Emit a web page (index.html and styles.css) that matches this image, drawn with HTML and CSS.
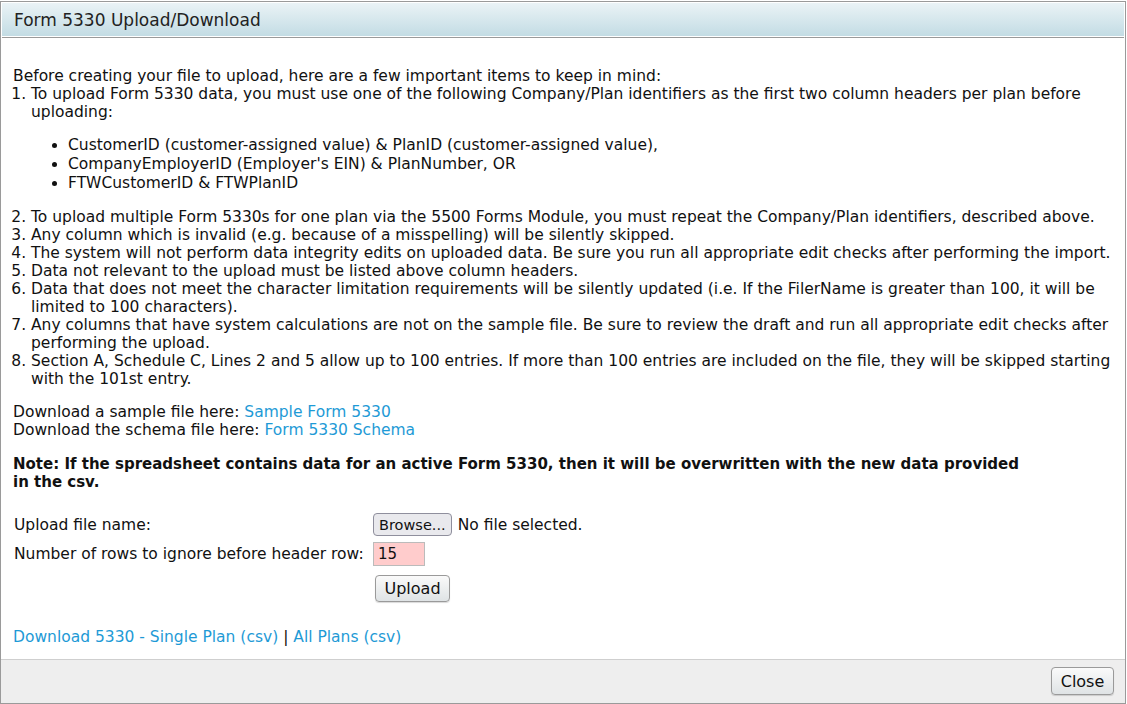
FILE: index.html
```html
<!DOCTYPE html>
<html>
<head>
<meta charset="utf-8">
<link rel="stylesheet" href="styles.css">
</head>
<body>
<div class="dialog">
  <div class="titlebar"><span class="title">Form 5330 Upload/Download</span></div>
  <div class="content">
    <p class="intro">Before creating your file to upload, here are a few important items to keep in mind:</p>
    <ol class="items">
      <li>To upload Form 5330 data, you must use one of the following Company/Plan identifiers as the first two column headers per plan before uploading:
        <ul class="ids">
          <li>CustomerID (customer-assigned value) &amp; PlanID (customer-assigned value),</li>
          <li>CompanyEmployerID (Employer's EIN) &amp; PlanNumber, OR</li>
          <li>FTWCustomerID &amp; FTWPlanID</li>
        </ul>
      </li>
      <li>To upload multiple Form 5330s for one plan via the 5500 Forms Module, you must repeat the Company/Plan identifiers, described above.</li>
      <li>Any column which is invalid (e.g. because of a misspelling) will be silently skipped.</li>
      <li>The system will not perform data integrity edits on uploaded data. Be sure you run all appropriate edit checks after performing the import.</li>
      <li>Data not relevant to the upload must be listed above column headers.</li>
      <li>Data that does not meet the character limitation requirements will be silently updated (i.e. If the FilerName is greater than 100, it will be limited to 100 characters).</li>
      <li>Any columns that have system calculations are not on the sample file. Be sure to review the draft and run all appropriate edit checks after performing the upload.</li>
      <li>Section A, Schedule C, Lines 2 and 5 allow up to 100 entries. If more than 100 entries are included on the file, they will be skipped starting with the 101st entry.</li>
    </ol>
    <p class="downloads">Download a sample file here: <a class="link" href="#">Sample Form 5330</a><br>Download the schema file here: <a class="link" href="#">Form 5330 Schema</a></p>
    <p class="note">Note: If the spreadsheet contains data for an active Form 5330, then it will be overwritten with the new data provided in the csv.</p>
    <div class="form">
      <div class="row">
        <span class="label">Upload file name:</span>
        <span class="field"><button class="browse" type="button">Browse...</button><span class="nofile">No file selected.</span></span>
      </div>
      <div class="row">
        <span class="label">Number of rows to ignore before header row:</span>
        <span class="field"><input class="rows" type="text" value="15"></span>
      </div>
      <div class="row row-action">
        <span class="label"></span>
        <span class="field"><button class="btn upload" type="button">Upload</button></span>
      </div>
    </div>
    <p class="csv"><a class="link" href="#">Download 5330 - Single Plan (csv)</a> | <a class="link" href="#">All Plans (csv)</a></p>
  </div>
  <div class="footer"><button class="btn close" type="button">Close</button></div>
</div>
</body>
</html>
```

FILE: styles.css
```css
html, body {
  margin: 0;
  padding: 0;
  background: #ffffff;
}
body {
  font-family: "DejaVu Sans", Verdana, sans-serif;
  font-size: 15.5px;
  color: #111;
  padding-top: 1px;
}
.dialog {
  border: 1px solid #9a9a9a;
  display: flex;
  flex-direction: column;
  box-sizing: border-box;
  width: 1126px;
  height: 703px;
}
.titlebar {
  margin: 1px 1px 0 1px;
  height: 33px;
  background: linear-gradient(#eaf3f6, #c3dce4);
  border-bottom: 1px solid #fff;
  box-shadow: 0 1px 0 #9a9a9a;
  display: flex;
  align-items: center;
  padding-left: 12px;
}
.title {
  font-size: 17px;
  color: #222;
}
.content {
  flex: 1;
  padding: 29px 12px 0 12px;
  line-height: 18px;
  margin-top: 1px;
}
.intro {
  margin: 0;
}
.items {
  margin: 0;
  padding-left: 18px;
}
.ids {
  margin: 15px 0 15px 0;
  padding-left: 37px;
  list-style: disc;
  line-height: 19px;
}
.downloads {
  margin: 15px 0 0 0;
}
.link {
  color: #1e9ad6;
  text-decoration: none;
}
.note {
  font-weight: bold;
  font-size: 15px;
  margin: 16px 0 0 0;
  padding-right: 80px;
}
.form {
  margin-top: 22px;
  display: flex;
  flex-direction: column;
  gap: 6px;
}
.row {
  display: flex;
  align-items: center;
}
.row-action {
  margin-top: 3px;
}
.label {
  width: 359px;
  padding-left: 1px;
}
.field {
  display: flex;
  align-items: center;
  gap: 6px;
}
.browse {
  font-family: "DejaVu Sans", Verdana, sans-serif;
  font-size: 14.5px;
  height: 23px;
  padding: 0 5px;
  border: 1px solid #8f8f9d;
  border-radius: 4px;
  background: #e9e9ed;
  color: #111;
}
.rows {
  font-family: "DejaVu Sans", Verdana, sans-serif;
  font-size: 15px;
  width: 52px;
  height: 24px;
  box-sizing: border-box;
  border: 1px solid #bbb;
  background: #ffcccc;
  padding: 0 4px;
  color: #111;
}
.btn {
  font-family: "DejaVu Sans", Verdana, sans-serif;
  font-size: 16px;
  color: #111;
  border: 1px solid #9a9a9a;
  border-radius: 4px;
  background: linear-gradient(#fafafa, #dfe3e5);
  box-shadow: 0 1px 1px rgba(0,0,0,0.15);
  padding: 0 8px;
}
.upload {
  height: 27px;
  margin-left: 2px;
  width: 75px;
}
.csv {
  margin: 26px 0 0 0;
}
.footer {
  height: 43px;
  background: #eeeeee;
  border-top: 1px solid #cfcfcf;
  display: flex;
  align-items: center;
  justify-content: flex-end;
  padding-right: 11px;
}
.close {
  height: 28px;
  width: 63px;
  margin-top: -1px;
}
```
